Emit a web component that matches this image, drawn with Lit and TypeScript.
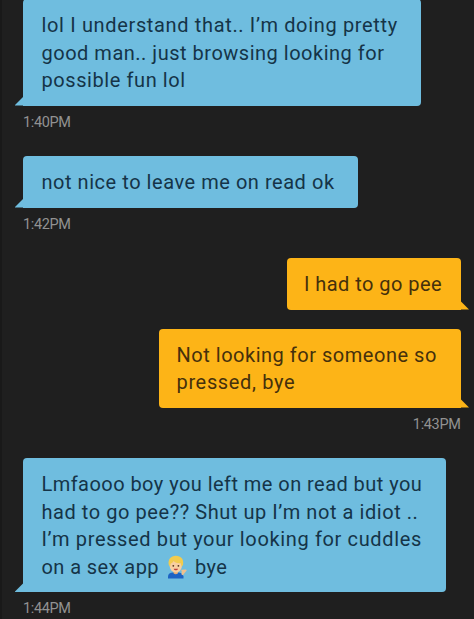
import { LitElement, css, html, svg, nothing } from "lit";
import { customElement, property } from "lit/decorators.js";
import { classMap } from "lit/directives/class-map.js";
import { styleMap } from "lit/directives/style-map.js";

interface Line {
  text: string;
  tracking: number;
  emoji?: boolean;
  after?: string;
}

interface Message {
  mine: boolean;
  width: number;
  lines: Line[];
  time?: string;
}

const messages: Message[] = [
  {
    mine: false,
    width: 397.5,
    time: "1:40PM",
    lines: [
      { text: "lol I understand that.. I’m doing pretty", tracking: 0.65 },
      { text: "good man.. just browsing looking for", tracking: 0.51 },
      { text: "possible fun lol", tracking: 0.58 },
    ],
  },
  {
    mine: false,
    width: 334.5,
    time: "1:42PM",
    lines: [{ text: "not nice to leave me on read ok", tracking: 0.54 }],
  },
  {
    mine: true,
    width: 174,
    lines: [{ text: "I had to go pee", tracking: 0.45 }],
  },
  {
    mine: true,
    width: 301.5,
    time: "1:43PM",
    lines: [
      { text: "Not looking for someone so", tracking: 0.52 },
      { text: "pressed, bye", tracking: 0.65 },
    ],
  },
  {
    mine: false,
    width: 423,
    time: "1:44PM",
    lines: [
      { text: "Lmfaooo boy you left me on read but you", tracking: 0.45 },
      { text: "had to go pee?? Shut up I’m not a idiot ..", tracking: 0.56 },
      { text: "I’m pressed but your looking for cuddles", tracking: 0.64 },
      { text: "on a sex app", tracking: 0.42, emoji: true, after: "bye" },
    ],
  },
];

@customElement("chat-message")
export class ChatMessage extends LitElement {
  @property({ attribute: false }) message!: Message;

  static get styles() {
    return css`
      :host {
        display: block;
      }

      .message {
        display: flex;
        flex-direction: column;
        align-items: flex-start;
      }

      .message.mine {
        align-items: flex-end;
      }

      .bubble {
        position: relative;
        box-sizing: border-box;
        padding: 13px 18.5px 11px;
        border-radius: 4px 4px 4px 0;
        background: #6fbddf;
        color: #153448;
        font-size: 20px;
        line-height: 27.5px;
      }

      .mine .bubble {
        padding-left: 17.5px;
        border-radius: 4px 4px 0 4px;
        background: #fdb417;
        color: #45300c;
      }

      .tail {
        position: absolute;
        left: -8.5px;
        bottom: 0;
        width: 9px;
        height: 9px;
        background: inherit;
        clip-path: polygon(100% 0, 100% 100%, 0 100%);
      }

      .mine .tail {
        left: auto;
        right: -8.5px;
        clip-path: polygon(0 0, 100% 100%, 0 100%);
      }

      .line {
        display: flex;
        align-items: center;
        height: 27.5px;
        white-space: pre;
      }

      .emoji {
        width: 20px;
        height: 24px;
        margin: 0 8px 0 8px;
        flex: none;
      }

      .time {
        margin-top: 8px;
        font-size: 14.5px;
        line-height: 18px;
        letter-spacing: -0.35px;
        color: #929292;
      }
    `;
  }

  renderEmoji() {
    return svg`<svg class="emoji" viewBox="0 0 20 24">
      <path d="M1 23.500v-2c0-2.700 2.200-4 5-4h5c3 0 5 1.400 5.500 4v2z" fill="#1c63c4" />
      <path d="M6.500 15h4.500v3.200c-1.200 1.500-3.300 1.500-4.500 0z" fill="#e5ae78" />
      <ellipse cx="8.800" cy="10.500" rx="6.200" ry="7" fill="#f8cfa0" />
      <path d="M1.800 10C.6 4.500 4 .8 8.800.8c5.300 0 8.400 3.600 7.200 9.200l-1.300 1.800-.9-3.600c-3.400.2-5.700-.6-7.300-2.200-.6 1.500-1.700 2.300-2.900 2.800l-.5 3z" fill="#f2cc4e" />
      <circle cx="6.300" cy="10.800" r=".9" fill="#54351f" />
      <circle cx="11.400" cy="10.800" r=".9" fill="#54351f" />
      <path d="M6.700 13.700h4.300c-.5 2-3.800 2-4.300 0z" fill="#bf413b" />
      <path d="M14.500 19.500l.2-3.200-.6-1.500 5-.3.600 1-2.300 2.700-1.500 2z" fill="#efc08e" />
    </svg>`;
  }

  render() {
    const { mine, width, lines, time } = this.message;
    return html`<div class=${classMap({ message: true, mine })}>
      <div class="bubble" style=${styleMap({ width: `${width}px` })}>
        ${lines.map(
          (line) => html`<div class="line" style=${styleMap({ letterSpacing: `${line.tracking}px` })}><span>${line.text}</span>${line.emoji ? this.renderEmoji() : nothing}${line.after ? html`<span>${line.after}</span>` : nothing}</div>`
        )}
        <div class="tail"></div>
      </div>
      ${time ? html`<div class="time">${time}</div>` : nothing}
    </div>`;
  }
}

@customElement("app-root")
export class AppRoot extends LitElement {
  static get styles() {
    return css`
      :host {
        display: block;
        box-sizing: border-box;
        height: 619px;
        overflow: hidden;
        border-left: 2px solid #191919;
        background: #1f1f1f;
        font-family: Roboto, "Liberation Sans", sans-serif;
      }

      .thread {
        display: flex;
        flex-direction: column;
        margin-top: -1px;
        padding: 0 13.5px 0 21px;
      }

      .timed {
        margin-bottom: 24.5px;
      }

      .grouped {
        margin-bottom: 19px;
      }
    `;
  }

  render() {
    return html`<div class="thread">
      ${messages.map(
        (m) => html`<chat-message class=${m.time ? "timed" : "grouped"} .message=${m}></chat-message>`
      )}
    </div>`;
  }
}
